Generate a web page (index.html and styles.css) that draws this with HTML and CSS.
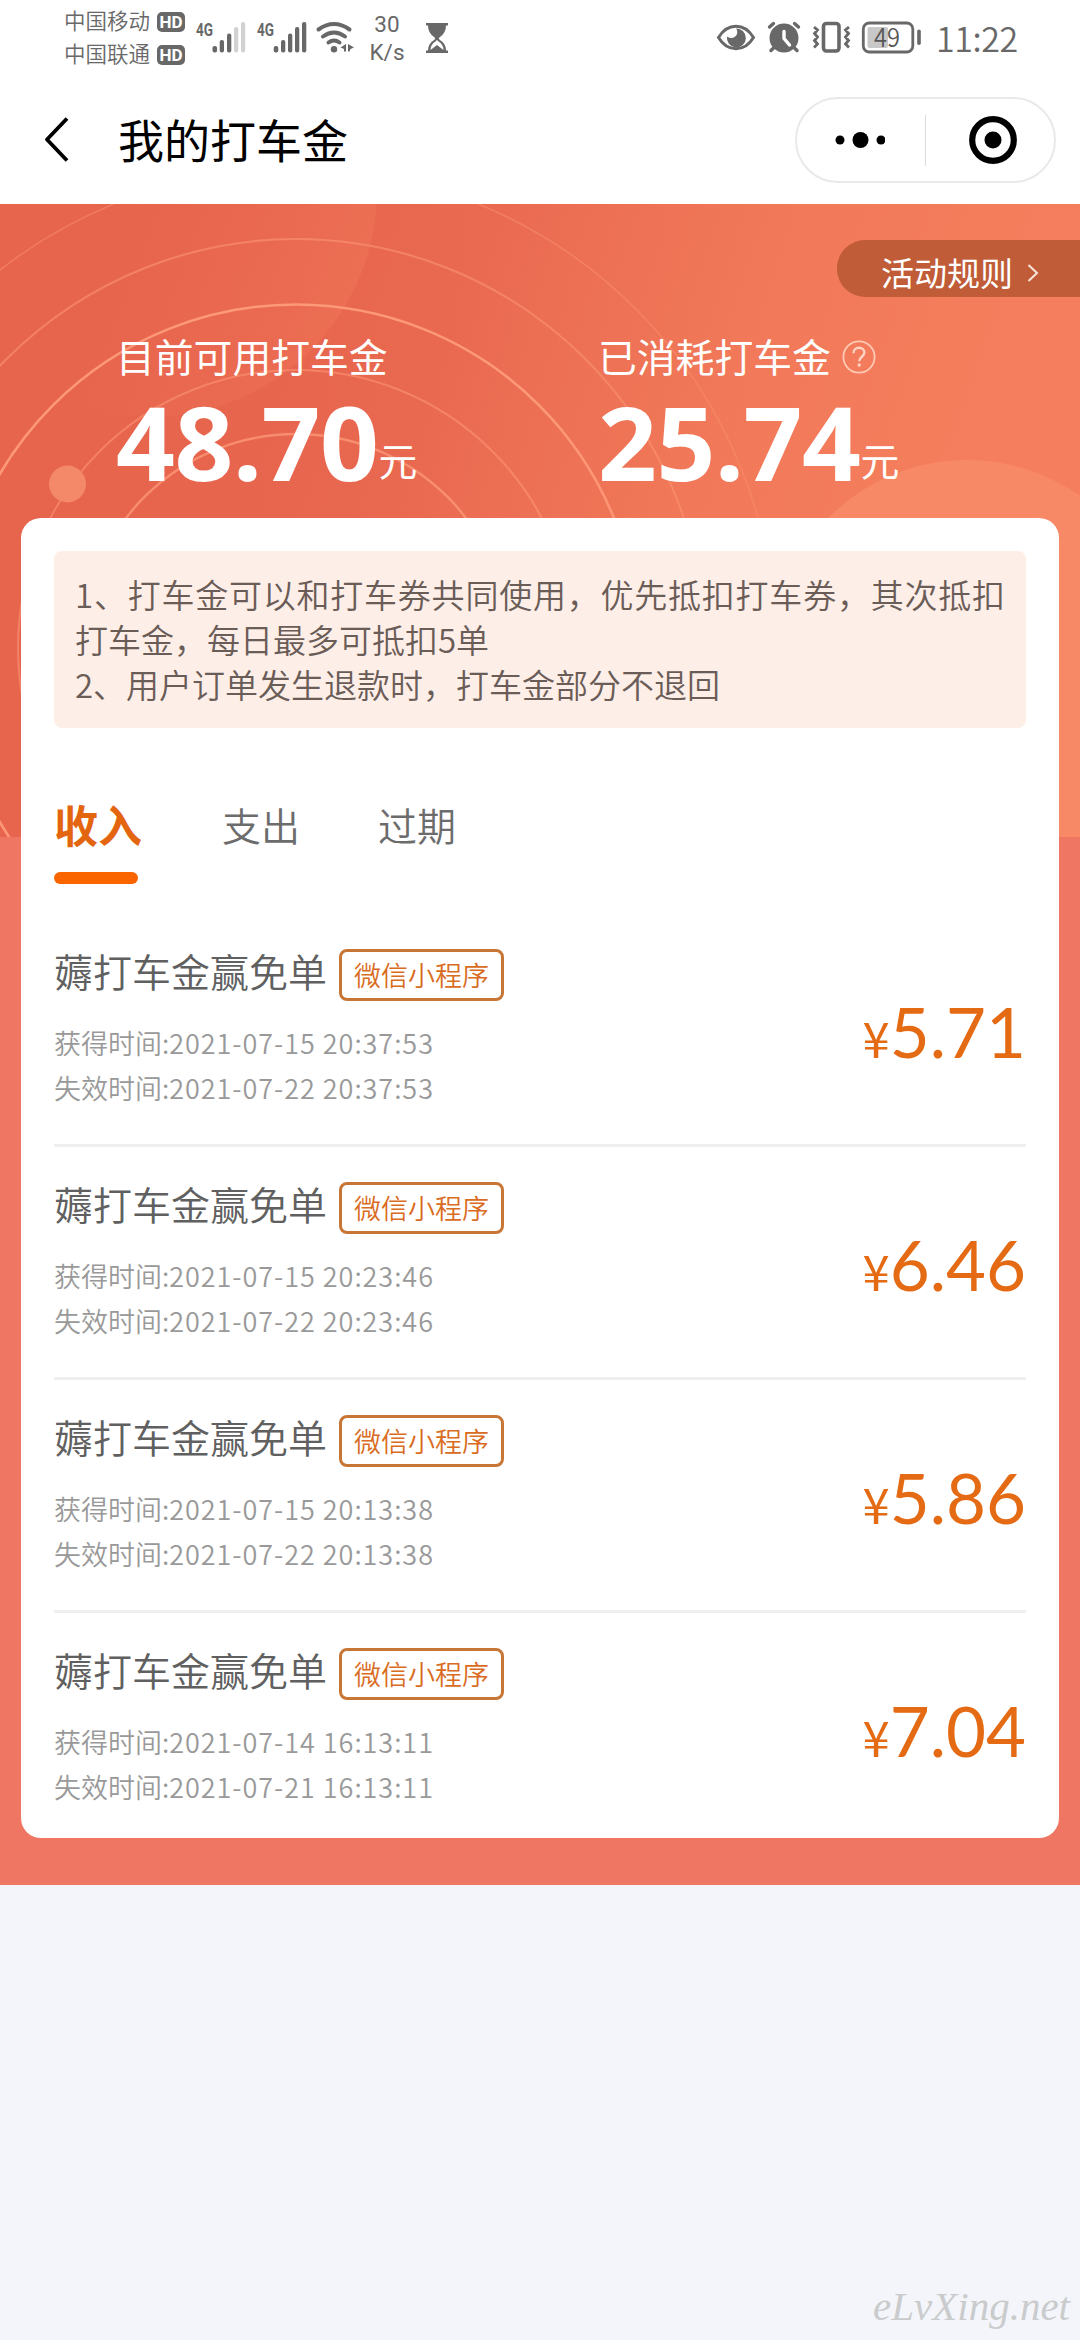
FILE: index.html
```html
<!DOCTYPE html>
<html lang="zh-CN">
<head>
<meta charset="utf-8">
<title>我的打车金</title>
<link rel="stylesheet" href="styles.css">
</head>
<body>
<header class="status">
  <div class="carriers">
    <div class="carrier"><span>中国移动</span><b class="hd">HD</b></div>
    <div class="carrier"><span>中国联通</span><b class="hd">HD</b></div>
  </div>
  <svg class="signal" width="50" height="34" viewBox="196 21 50 34">
    <text class="net" x="196" y="36" textLength="17" lengthAdjust="spacingAndGlyphs">4G</text>
    <g fill="#686868"><rect x="212.5" y="46" width="4.6" height="6.4" rx="2"/><rect x="219.700" y="40" width="4.300" height="12.400" rx="2"/><rect x="227" y="33.500" width="4.300" height="19" rx="2"/></g>
    <g fill="#d2d2d2"><rect x="234" y="27" width="4.300" height="25.500" rx="2"/><rect x="241" y="22" width="4.200" height="30.500" rx="2"/></g>
  </svg>
  <svg class="signal-two" width="51" height="34" viewBox="257 21 51 34">
    <text class="net" x="257" y="36" textLength="17" lengthAdjust="spacingAndGlyphs">4G</text>
    <g fill="#686868"><rect x="273.700" y="46" width="4.600" height="6.400" rx="2"/><rect x="281" y="40" width="4.300" height="12.400" rx="2"/><rect x="288" y="33.500" width="4.300" height="19" rx="2"/><rect x="295" y="27" width="4.300" height="25.500" rx="2"/><rect x="302" y="22" width="4.300" height="30.500" rx="2"/></g>
  </svg>
  <svg class="wifi" width="38" height="34" viewBox="316 21 38 34">
    <g fill="none" stroke="#686868" stroke-width="4" stroke-linecap="round"><path d="M318.500 29.500q15.500-11 31 0"/><path d="M323 36.500q11-8 22 0"/><path d="M328.500 42.500q5.500-4 11 0"/></g>
    <circle cx="334" cy="49.300" r="3.200" fill="#686868"/>
    <path fill="#686868" d="M346 44v7.500h-2v-2.500l-3.500-1.500zM348 44l6 3.500-3.500 1.500-1 2.500h-1.500z"/>
  </svg>
  <div class="speed"><span>30</span><span>K/s</span></div>
  <svg class="hourglass" width="23" height="34" viewBox="426 21 23 34">
    <path fill="#686868" d="M426 23h22v2.500h-2c0 5-2 8.500-6 11.500-1.500 1-1.500 2 0 3 4 2.500 6 6 6 10.500h2V53h-22v-2.500h2c0-4.500 2-8 6-10.500 1.500-1 1.500-2 0-3-4-3-6-6.500-6-11.500h-2z"/>
    <path fill="#fff" d="M430.500 50c0-4 2-6.500 5-8.500l1.500-1.500 1.500 1.500c3 2 5 4.500 5 8.500l-6.500-5z"/>
  </svg>
  <svg class="eye" width="39" height="34" viewBox="719 21 39 34">
    <path d="M720.500 37.500c9-15 26-15 35 0-9 15-26 15-35 0z" fill="none" stroke="#686868" stroke-width="3"/>
    <path fill="#686868" d="M738 28.500a9.500 9.500 0 1 1-9 8c4 3 9 1 10-2.500.700-2.500 0-4.500-1-5.500z"/>
  </svg>
  <svg class="alarm" width="34" height="34" viewBox="768 21 34 34">
    <circle cx="785" cy="38" r="14.500" fill="#686868"/>
    <g stroke="#686868" stroke-width="3.400" stroke-linecap="round"><path d="M770.500 27l4-3.500M799.500 27l-4-3.500M774.500 48l-2.500 2.500M795.500 48l2.500 2.500"/></g>
    <path d="M785 31.500v7l5.500 6.500" fill="none" stroke="#fff" stroke-width="3.400" stroke-linecap="round"/>
  </svg>
  <svg class="vibrate" width="38" height="34" viewBox="812 21 38 34">
    <rect x="823.500" y="23.500" width="15.500" height="27.500" rx="3" fill="none" stroke="#686868" stroke-width="3.600"/>
    <path d="M814 27l3.500 3-3 3.500 3 3.500-3 3.500 3 3.500-3.500 3.500M849 27l-3.500 3 3 3.500-3 3.500 3 3.500-3 3.500 3.500 3.500" fill="none" stroke="#686868" stroke-width="2.800"/>
  </svg>
  <svg class="battery" width="60" height="34" viewBox="862 21 60 34">
    <rect x="863.300" y="23" width="49.500" height="29" rx="6" fill="none" stroke="#686868" stroke-width="2.800"/>
    <rect x="867.500" y="27" width="20.500" height="21" rx="2" fill="#c8c8c8"/>
    <rect x="917.200" y="29.500" width="3.600" height="15.500" rx="1.800" fill="#686868"/>
    <text class="charge" x="874" y="46.700" textLength="26" lengthAdjust="spacingAndGlyphs">49</text>
  </svg>
  <time class="clock">11:22</time>
</header>

<nav class="nav">
  <svg class="back" width="26" height="48" viewBox="0 0 26 48"><path d="M24 2.500L4 23.500 24 44.500" fill="none" stroke="#000" stroke-width="3.800" stroke-linejoin="round"/></svg>
  <h1>我的打车金</h1>
  <div class="capsule">
    <svg width="50" height="20" viewBox="0 0 50 20"><circle cx="5" cy="10" r="4.500"/><circle cx="25.500" cy="10" r="8"/><circle cx="46" cy="10" r="4.500"/></svg>
    <i></i>
    <svg width="48" height="48" viewBox="0 0 48 48"><circle cx="24" cy="24" r="20.800" fill="none" stroke="#000" stroke-width="6.200"/><circle cx="24" cy="24" r="8.500"/></svg>
  </div>
</nav>

<main class="wallet">
  <svg class="backdrop" width="1080" height="633" viewBox="0 204 1080 633">
    <defs>
      <linearGradient id="base" gradientUnits="userSpaceOnUse" x1="180" y1="440" x2="880" y2="690"><stop offset="0" stop-color="#e7644d"/><stop offset=".3" stop-color="#e8674f"/><stop offset=".7" stop-color="#f17859"/><stop offset="1" stop-color="#f57f5e"/></linearGradient>
      <linearGradient id="glow" gradientUnits="userSpaceOnUse" x1="120" y1="240" x2="350" y2="330"><stop offset="0" stop-color="#f07658" stop-opacity="0"/><stop offset="1" stop-color="#f07658" stop-opacity=".5"/></linearGradient>
      <linearGradient id="right" gradientUnits="userSpaceOnUse" x1="260" y1="0" x2="800" y2="0"><stop offset="0" stop-color="#f27a5a" stop-opacity="0"/><stop offset="1" stop-color="#f37c5b"/></linearGradient>
      <linearGradient id="ring" gradientUnits="userSpaceOnUse" x1="0" y1="0" x2="760" y2="0"><stop offset="0" stop-color="#ff9d7c"/><stop offset=".7" stop-color="#ff9d7c"/><stop offset="1" stop-color="#ff9d7c" stop-opacity=".75"/></linearGradient>
    </defs>
    <rect y="204" width="1080" height="633" fill="url(#base)"/>
    <rect y="204" width="1080" height="633" fill="url(#right)" opacity=".35"/>
    <circle cx="150" cy="190" r="227" fill="url(#glow)"/>
    <circle cx="967" cy="655" r="195" fill="#f88967"/>
    <rect x="1050" y="520" width="30" height="317" fill="#f78967"/>
    <g fill="none" stroke="url(#ring)">
      <circle cx="296" cy="648" r="480" stroke-width="1.500" opacity=".4"/>
      <circle cx="296" cy="648" r="409" stroke-width="2" opacity=".5"/>
      <circle cx="296" cy="648" r="343.500" stroke-width="2.600" opacity=".9"/>
      <circle cx="296" cy="648" r="278" stroke-width="2" opacity=".5"/>
      <circle cx="296" cy="648" r="214" stroke-width="2.400" opacity=".7"/>
    </g>
    <circle cx="67.500" cy="484" r="18.500" fill="#f38969"/>
  </svg>

  <section class="hero">
    <a class="rules">活动规则<svg width="12" height="20" viewBox="0 0 12 20"><path d="M1.500 2l8.500 8-8.500 8" fill="none" stroke="#fbe6dc" stroke-width="2"/></svg></a>
    <div class="totals">
      <div class="total">
        <div class="label">目前可用打车金</div>
        <div class="sum"><strong>48.70</strong><span>元</span></div>
      </div>
      <div class="total">
        <div class="label">已消耗打车金<svg width="34" height="34" viewBox="0 0 34 34"><circle cx="17" cy="17" r="15.600" fill="none" stroke="#ffc9b5" stroke-width="1.800"/><path d="M11.500 13.200c0-3.500 2.400-5.400 5.500-5.400s5.400 1.900 5.400 4.800c0 4-5.200 4.300-5.200 8.700" fill="none" stroke="#ffd3c3" stroke-width="2.400"/><circle cx="17.200" cy="25" r="1.700" fill="#ffd3c3"/></svg></div>
        <div class="sum"><strong>25.74</strong><span>元</span></div>
      </div>
    </div>
  </section>

  <section class="card">
    <div class="notice">
      <p>1、打车金可以和打车券共同使用，优先抵扣打车券，其次抵扣打车金，每日最多可抵扣5单</p>
      <p>2、用户订单发生退款时，打车金部分不退回</p>
    </div>
    <div class="tabs">
      <a class="tab active">收入</a>
      <a class="tab">支出</a>
      <a class="tab">过期</a>
    </div>
    <ul class="records">
      <li>
        <div><h2><span>薅打车金赢免单</span><span class="tag">微信小程序</span></h2><p>获得时间:<time>2021-07-15 20:37:53</time></p><p>失效时间:<time>2021-07-22 20:37:53</time></p></div>
        <div class="price"><small>¥</small>5.71</div>
      </li>
      <li>
        <div><h2><span>薅打车金赢免单</span><span class="tag">微信小程序</span></h2><p>获得时间:<time>2021-07-15 20:23:46</time></p><p>失效时间:<time>2021-07-22 20:23:46</time></p></div>
        <div class="price"><small>¥</small>6.46</div>
      </li>
      <li>
        <div><h2><span>薅打车金赢免单</span><span class="tag">微信小程序</span></h2><p>获得时间:<time>2021-07-15 20:13:38</time></p><p>失效时间:<time>2021-07-22 20:13:38</time></p></div>
        <div class="price"><small>¥</small>5.86</div>
      </li>
      <li>
        <div><h2><span>薅打车金赢免单</span><span class="tag">微信小程序</span></h2><p>获得时间:<time>2021-07-14 16:13:11</time></p><p>失效时间:<time>2021-07-21 16:13:11</time></p></div>
        <div class="price"><small>¥</small>7.04</div>
      </li>
    </ul>
  </section>
</main>
<footer class="watermark">eLvXing.net</footer>
</body>
</html>
```

FILE: styles.css
```css
* { box-sizing: border-box; margin: 0; padding: 0; }

body {
  display: flex;
  flex-direction: column;
  width: 1080px;
  height: 2340px;
  overflow: hidden;
  background: #f4f5fa;
  font-family: "Noto Sans CJK SC", sans-serif;
  font-weight: 350;
}

svg { display: block; flex: none; }

/* Status bar */
.status {
  display: flex;
  align-items: center;
  height: 76px;
  padding: 0 64px;
  background: #fff;
  color: #686868;
}
.status svg { overflow: visible; }
.carriers { width: 121px; }
.carrier {
  display: flex;
  align-items: center;
  gap: 7px;
  height: 33px;
  font-size: 21.5px;
  line-height: 31px;
}
.carrier span { margin-top: -4px; }
.hd {
  width: 28px;
  height: 20px;
  border-radius: 5px;
  background: #686868;
  color: #fff;
  font: 700 17px/20px Roboto, sans-serif;
  text-align: center;
}
.signal { margin-left: 11px; }
.signal-two { margin-left: 11px; }
.wifi { margin-left: 8px; }
.net { font: 700 18px Roboto, sans-serif; fill: #686868; }
.speed {
  display: flex;
  flex-direction: column;
  align-items: center;
  width: 38px;
  margin: 0 0 0 14px;
  font: 400 22.5px/28px Roboto, sans-serif;
}
.hourglass { margin-left: 20px; }
.eye { margin-left: auto; }
.alarm { margin-left: 11px; }
.vibrate { margin-left: 11px; }
.battery { margin-left: 12px; }
.charge { font: 350 25px "Noto Sans CJK SC", sans-serif; fill: #585858; }
.clock {
  width: 80px;
  margin: -1px 0 0 14px;
  font-size: 34px;
  line-height: 38px;
  letter-spacing: -.4px;
  white-space: nowrap;
}

/* Navigation bar */
.nav {
  display: flex;
  align-items: center;
  height: 128px;
  padding: 0 24px 0 43px;
  background: #fff;
}
.nav h1 {
  margin: -5px 0 0 49px;
  font-size: 46px;
  font-weight: 400;
  line-height: 60px;
  color: #000;
}
.capsule {
  display: flex;
  align-items: center;
  width: 261px;
  height: 86px;
  margin-left: auto;
  padding: 0 0 0 38px;
  border: 2px solid #e9e9e9;
  border-radius: 43px;
}
.capsule i { width: 1px; height: 51px; margin: 0 43px 0 40px; background: #dcdcdc; }

/* Wallet */
.wallet {
  position: relative;
  height: 1681px;
  padding: 0 21px;
  background: #ef7662;
}
.backdrop { position: absolute; left: 0; top: 0; overflow: hidden; }
.hero {
  position: relative;
  display: flex;
  flex-direction: column;
  height: 314px;
  margin: 0 -21px;
  padding-top: 36px;
  color: #fff;
  font-weight: 400;
}
.rules {
  display: flex;
  align-items: center;
  align-self: flex-end;
  width: 243px;
  height: 57px;
  padding: 6px 0 0 44px;
  border-radius: 28px 0 0 28px;
  background: #c05c37;
  font-size: 33px;
  line-height: 48px;
}
.rules svg { margin: 3px 0 0 14px; }
.totals { display: flex; margin-top: 31px; padding-left: 116px; }
.total { width: 483px; }
.label { display: flex; align-items: center; height: 54px; font-size: 38.8px; line-height: 54px; }
.label svg { margin: 4px 0 0 11px; }
.sum { display: flex; height: 104px; margin-top: 14px; }
.sum strong { font: 700 103px/90px "Noto Sans", sans-serif; letter-spacing: -.4px; }
.sum span { padding-top: 36px; font-size: 38.8px; line-height: 54px; }

.card {
  position: relative;
  height: 1320px;
  padding: 33px;
  border-radius: 20px;
  background: #fff;
}
.notice {
  height: 177px;
  padding: 21px 21px;
  border-radius: 8px;
  background: #feeee8;
  color: #6a5c57;
  font-size: 33px;
  line-height: 45px;
}
.notice p { text-align: justify; }

.tabs {
  display: flex;
  align-items: flex-start;
  height: 124px;
  margin-top: 32px;
  color: #6c6c6c;
  font-size: 39px;
  line-height: 60px;
}
.tab { height: 124px; margin-right: 78px; padding-top: 34px; }
.tab.active {
  width: 90px;
  color: #e46510;
  font-size: 44px;
  font-weight: 700;
}
.tab.active::after {
  content: "";
  display: block;
  width: 84px;
  height: 12px;
  margin-top: 18px;
  border-radius: 6px;
  background: #fa6500;
}

.records { list-style: none; padding-top: 30px; }
.records li {
  display: flex;
  justify-content: space-between;
  height: 233px;
  padding-top: 35px;
  border-bottom: 3px solid #efefef;
}
.records li:last-child { border: 0; }
.records h2 {
  display: flex;
  align-items: center;
  height: 51px;
  margin-bottom: 20px;
  color: #606060;
  font-size: 39px;
  font-weight: 350;
  line-height: 48px;
}
.records h2 span:first-child { margin-top: -10px; }
.tag {
  width: 165px;
  height: 52px;
  margin-left: 12px;
  border: 3px solid #c87636;
  border-radius: 8px;
  color: #d96c22;
  font-size: 27px;
  line-height: 46px;
  text-align: center;
}
.records p { color: #999; font-size: 27px; line-height: 45px; white-space: nowrap; }
.records time { letter-spacing: .95px; }
.price {
  padding-top: 32px;
  color: #e46a14;
  font: 400 69px/102px Lato, sans-serif;
  white-space: nowrap;
}
.price small { font: 400 49px "Noto Sans CJK SC", sans-serif; line-height: 1; }

.watermark {
  margin-top: auto;
  padding: 0 10px 11px 0;
  color: #c9cbcc;
  font: italic 400 41px/46px "Liberation Serif", serif;
  text-align: right;
}
```
